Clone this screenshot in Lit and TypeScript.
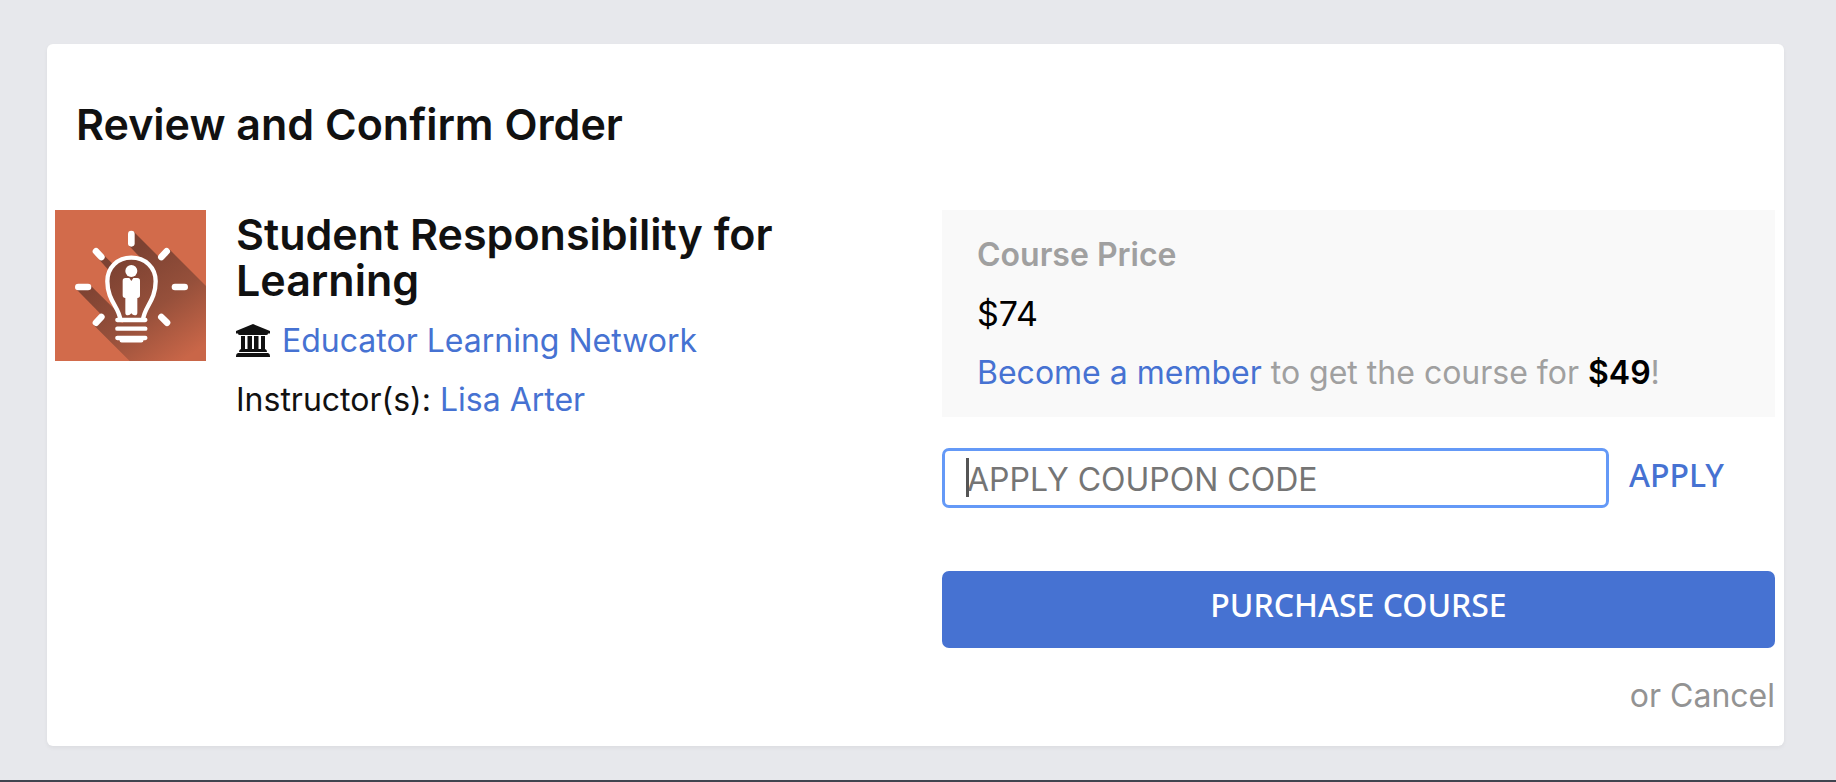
import { LitElement, html, css, svg } from "lit";
import { customElement, property } from "lit/decorators.js";

const rays = [
  [274, 102, 274, 130],
  [380, 154, 364, 171],
  [405, 261, 434, 261],
  [364, 351, 381, 368],
  [168, 368, 184, 351],
  [115, 261, 144, 261],
  [168, 154, 184, 171],
];

@customElement("course-thumbnail")
export class CourseThumbnail extends LitElement {
  static styles = css`
    :host {
      display: block;
      width: 151px;
      height: 151px;
      flex: none;
    }
    .art {
      display: block;
      width: 100%;
      height: 100%;
    }
  `;

  render() {
    return html`
      <svg class="art" viewBox="45 30 453 453" role="img" aria-label="Light bulb">
        <defs>
          <linearGradient id="shade" gradientUnits="userSpaceOnUse" x1="230" y1="190" x2="430" y2="480">
            <stop offset="0" stop-color="#7d4232" />
            <stop offset="0.5" stop-color="#96503b" />
            <stop offset="1" stop-color="#c96648" />
          </linearGradient>
          <linearGradient id="shadeLow" gradientUnits="userSpaceOnUse" x1="130" y1="260" x2="250" y2="380">
            <stop offset="0" stop-color="#7d4232" />
            <stop offset="1" stop-color="#96503b" />
          </linearGradient>
        </defs>
        <rect x="45" y="30" width="453" height="453" fill="#d26b4b" />
        <path fill="url(#shade)" d="M282 96L357 171L388 148L498 258V483H269L160 374L190 347L250 370L235 335L200 250L212 200L245 175L274 170L303 175L267 137Z" />
        <path fill="url(#shadeLow)" d="M151 256L236 340L240 380L190 350L109 268Z" />
        <path fill="#7d4232" d="M191 165L216 190L206 211L176 177Z" />
        <path
          fill="none" stroke="#fff" stroke-width="13"
          d="M241 360C238 322 202 302 202 244C202 202 233 173 274 173S347 202 347 244C347 302 312 322 309 360"
        />
        <g stroke="#fff" stroke-width="20" stroke-linecap="round">
          ${rays.map(([x1, y1, x2, y2]) => svg`<line x1=${x1} y1=${y1} x2=${x2} y2=${y2} />`)}
        </g>
        <g stroke="#fff" stroke-width="13" stroke-linecap="round">
          <path d="M232 360H316M232 386H316M232 414H316M245 421H304" />
        </g>
        <circle cx="274" cy="213" r="18" fill="#fff" />
        <path
          fill="#fff"
          d="M256 234H268L274 243L280 234H292Q300 234 300 242V286Q300 294 292 294V338Q292 346 284 346Q278 346 274 340Q270 346 264 346Q256 346 256 338V294Q248 294 248 286V242Q248 234 256 234Z"
        />
      </svg>
    `;
  }
}

@customElement("app-root")
export class AppRoot extends LitElement {
  @property() course = "Student Responsibility for Learning";

  static styles = css`
    :host {
      display: block;
      box-sizing: border-box;
      min-height: 100vh;
      padding: 44px 52px 32px 47px;
      border-bottom: 2px solid #40444f;
      background: #e7e8ec;
      color: #111;
      font: 400 32px/59px Inter, "Liberation Sans", sans-serif;
    }
    a {
      color: #4672d2;
      text-decoration: none;
    }
    p,
    h1,
    h2 {
      margin: 0;
    }
    .card {
      padding: 56px 9px 21px 8px;
      border-radius: 6px;
      background: #fff;
      box-shadow: 0 2px 4px rgba(0, 0, 0, 0.05);
    }
    .heading {
      padding: 0 21px;
      font-size: 43px;
      line-height: 48px;
      font-weight: 600;
    }
    .columns {
      display: grid;
      grid-template-columns: 1fr 1fr;
      gap: 54px;
      margin-top: 62px;
    }
    .course {
      display: flex;
      align-items: flex-start;
      gap: 30px;
    }
    .title {
      padding-top: 1px;
      margin-bottom: 8px;
      font-size: 43px;
      line-height: 46px;
      font-weight: 600;
    }
    .provider {
      display: flex;
      align-items: center;
      gap: 12px;
    }
    .bank {
      width: 34px;
      height: 34px;
      flex: none;
    }
    .price {
      padding: 15px 35px;
      background: #f9f9f9;
      color: #a0a0a0;
    }
    .label {
      font-weight: 600;
    }
    .amount {
      font-size: 34px;
      color: #000;
    }
    .member {
      font-weight: 600;
      color: #000;
    }
    .coupon {
      display: grid;
      grid-template-columns: 1fr 166px;
      margin-top: 31px;
    }
    .field {
      position: relative;
      display: flex;
    }
    .input {
      box-sizing: border-box;
      width: 100%;
      height: 60px;
      padding: 3px 22px 0;
      border: 3px solid #6499f7;
      border-radius: 7px;
      outline: none;
      background: #fff;
      color: #111;
      caret-color: transparent;
      font: inherit;
      line-height: 40px;
    }
    .input::placeholder {
      color: #757575;
      opacity: 1;
    }
    .caret {
      position: absolute;
      left: 24px;
      top: 10px;
      width: 3px;
      height: 39px;
      background: #555;
    }
    .apply {
      padding: 0 0 6px 20px;
      border: 0;
      background: none;
      color: #4672d2;
      font: 500 32px/54px "Noto Sans", sans-serif;
      text-align: left;
    }
    .purchase {
      display: block;
      width: 100%;
      margin-top: 63px;
      padding: 10px 0 19px;
      border: 0;
      border-radius: 7px;
      background: #4672d2;
      color: #fff;
      font: 500 32px/48px "Noto Sans", sans-serif;
    }
    .cancel {
      margin-top: 18px;
      text-align: right;
      color: #939393;
    }
    .cancel a {
      color: inherit;
    }
  `;

  render() {
    return html`
      <main class="card">
        <h1 class="heading">Review and Confirm Order</h1>
        <div class="columns">
          <section class="course">
            <course-thumbnail></course-thumbnail>
            <div>
              <h2 class="title">${this.course}</h2>
              <p class="provider">
                <svg class="bank" viewBox="0 0 34 34" fill="#111" aria-hidden="true">
                  <path d="M17 0L34 7V9.500H32Q32 11 30 11H4Q2 11 2 9.500H0V7ZM5 12H9V25H11.500V12H16V25H18V12H22.500V25H25V12H29V25Q31 25.500 31 28H3Q3 25.500 5 25ZM2 29H32Q34 29.500 34 32V33H0V32Q0 29.500 2 29Z" />
                </svg>
                <a href="#network">Educator Learning Network</a>
              </p>
              <p>Instructor(s): <a href="#instructor">Lisa Arter</a></p>
            </div>
          </section>
          <section>
            <div class="price">
              <p class="label">Course Price</p>
              <p class="amount">$74</p>
              <p><a href="#join">Become a member</a> to get the course for <span class="member">$49</span>!</p>
            </div>
            <form class="coupon" @submit=${(e: Event) => e.preventDefault()}>
              <div class="field">
                <input class="input" type="text" aria-label="Coupon code" placeholder="APPLY COUPON CODE" />
                <span class="caret"></span>
              </div>
              <button class="apply" type="submit">APPLY</button>
            </form>
            <button class="purchase" type="button">PURCHASE COURSE</button>
            <p class="cancel"><a href="#cancel">or Cancel</a></p>
          </section>
        </div>
      </main>
    `;
  }
}
